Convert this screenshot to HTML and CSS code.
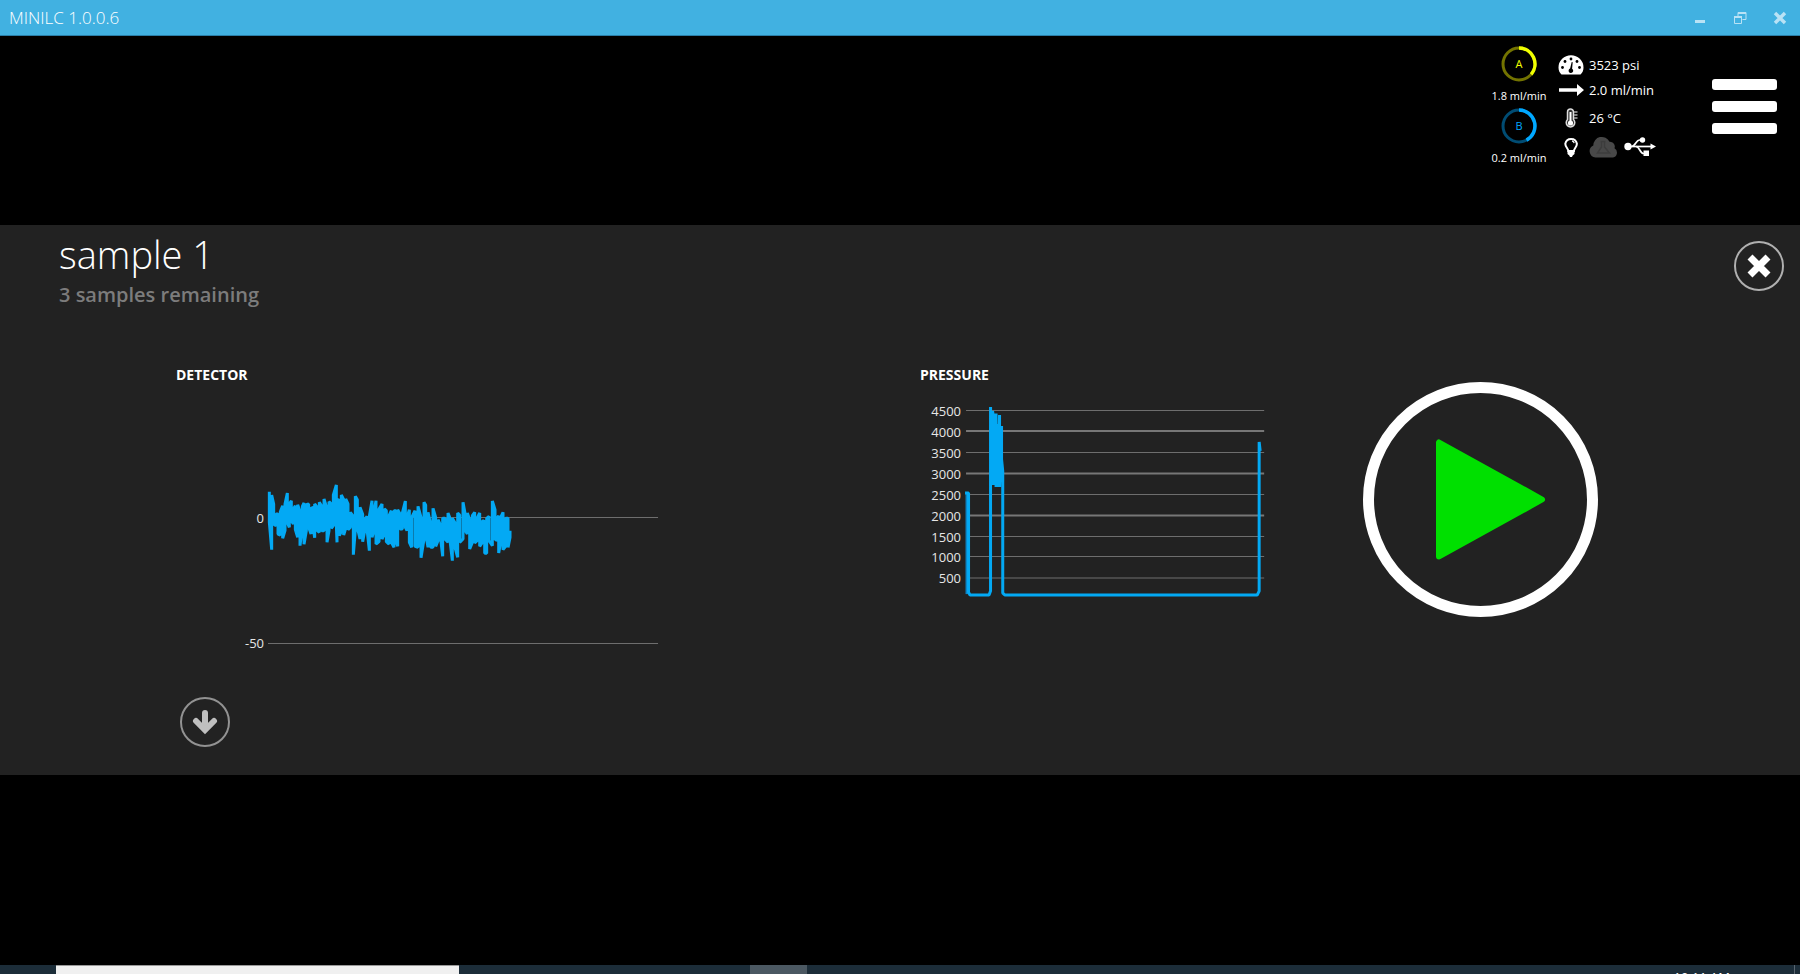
FILE: index.html
```html
<!DOCTYPE html>
<html lang="en">
<head>
<meta charset="utf-8">
<title>MINILC 1.0.0.6</title>
<link rel="stylesheet" href="styles.css">
</head>
<body>
<div class="window">
  <div class="titlebar">
    <span class="app-name">MINILC 1.0.0.6</span>
    <div class="window-buttons">
      <button type="button" class="window-button" aria-label="Minimize"><svg width="14" height="14" viewBox="0 0 14 14"><path d="M2 9h10v3H2z" fill="currentColor"/></svg></button>
      <button type="button" class="window-button" aria-label="Restore"><svg width="14" height="14" viewBox="0 0 14 14" fill="none" stroke="currentColor"><path d="M5 5V1.500h8V8.500H9.500"/><path d="M5 2h8" stroke-width="2"/><path d="M1.500 5.500h7v7h-7z"/><path d="M1 6h8" stroke-width="2"/></svg></button>
      <button type="button" class="window-button" aria-label="Close"><svg width="14" height="14" viewBox="0 0 14 14"><path d="M2 2l10 10M12 2L2 12" stroke="currentColor" stroke-width="3.400"/></svg></button>
    </div>
  </div>

  <header class="header">
    <div class="pumps">
      <div class="pump">
        <svg class="ring" viewBox="0 0 36 36"><circle cx="18" cy="18" r="16" fill="none" stroke="#737300" stroke-width="3"/><path d="M18 2A16 16 0 0 1 30.200 28.300" fill="none" stroke="#f0ff00" stroke-width="3.500"/><text x="18" y="22" class="ring-text ring-a">A</text></svg>
        <span class="pump-flow">1.8 ml/min</span>
      </div>
      <div class="pump">
        <svg class="ring" viewBox="0 0 36 36"><circle cx="18" cy="18" r="16" fill="none" stroke="#004c73" stroke-width="3"/><path d="M18 2A16 16 0 0 1 25.500 32.100" fill="none" stroke="#00a8ff" stroke-width="3.500"/><text x="18" y="22" class="ring-text ring-b">B</text></svg>
        <span class="pump-flow">0.2 ml/min</span>
      </div>
    </div>
    <div class="readings">
      <svg width="26" height="20" viewBox="0 0 26 20"><path fill="#fff" d="M3.500 19.500C1.500 17.500.5 15.500.5 12.500a12.500 12.300 0 0 1 25 0c0 3-1 5-3 7z"/><g fill="#000"><circle cx="4.500" cy="12.500" r="1.400"/><circle cx="7" cy="6.500" r="1.400"/><circle cx="13" cy="4" r="1.400"/><circle cx="19" cy="6.500" r="1.400"/><circle cx="21.500" cy="12.500" r="1.400"/><path d="M13.700 7l1 .2-.6 6.500a2.300 2.300 0 1 1-2-.2z"/></g></svg>
      <span>3523 psi</span>
      <svg width="26" height="14" viewBox="0 0 26 14"><path fill="#fff" d="M1 5.300h18V1l7 6-7 6V8.700H1z"/></svg>
      <span>2.0 ml/min</span>
      <svg width="26" height="20" viewBox="0 0 26 20"><path d="M9.500 11.500V4a3 3 0 0 1 6 0v7.500a4.300 4.300 0 1 1-6 0z" fill="#333" stroke="#ddd" stroke-width="1.500"/><circle cx="12.500" cy="15" r="2.600" fill="#fff"/><path d="M12.500 4v11" stroke="#fff" stroke-width="2"/><path d="M16 4h3.500M16 7h3.500M16 10h3.500" stroke="#aaa" stroke-width="1.500"/></svg>
      <span>26 °C</span>
      <svg width="26" height="20" viewBox="0 0 26 20"><path d="M10.300 14c0-2.500-3-3.800-3-7.300a5.900 5.900 0 0 1 11.600 0c0 3.500-3 4.800-3 7.300z" fill="none" stroke="#fff" stroke-width="2"/><path d="M14 3.800c1.300.3 2 1 2.200 2.300" fill="none" stroke="#fff" stroke-width="1.200"/><path fill="#fff" d="M9.500 13.500h7V17l-1.800 1.500-.7 1.500h-2l-.7-1.500L9.500 17z"/></svg>
      <span class="links">
        <svg width="30" height="22" viewBox="0 0 30 22"><path fill="#484848" d="M6.500 21.500A6.300 6.300 0 0 1 4.300 9.500 8.500 8.500 0 0 1 20.500 5.800a4.800 4.800 0 0 1 5 6.500 5 5 0 0 1-1.500 9.200z"/><path d="M11.500 5.500h5M12.500 6v5l-4 6h12l-5-6V6" fill="none" stroke="#3c3c3c" stroke-width="1.500"/></svg>
        <svg width="32" height="22" viewBox="0 0 32 22"><g fill="none" stroke="#fff" stroke-width="1.700"><path d="M4 10.500h24"/><path d="M7.500 10.500c4 0 4.500-6.500 8-6.500h3"/><path d="M12 10.500c3.500 0 4 7 7.500 7h2"/></g><circle cx="4" cy="10.500" r="3.700" fill="#fff"/><circle cx="18.500" cy="4" r="2.700" fill="#fff"/><path fill="#fff" d="M19.500 14.500H25V20h-5.500zM26.500 7.500l5.500 3-5.500 3z"/></svg>
      </span>
    </div>
    <button type="button" class="menu-button" aria-label="Menu"><i class="bar"></i><i class="bar"></i><i class="bar"></i></button>
  </header>

  <main class="panel">
    <div class="panel-head">
      <div>
        <h1 class="sample-name">sample 1</h1>
        <p class="sample-left">3 samples remaining</p>
      </div>
      <button type="button" class="round-button" aria-label="Close"><svg width="26" height="26" viewBox="0 0 26 26"><path d="M4 4l18 18M22 4L4 22" stroke="#fff" stroke-width="7"/></svg></button>
    </div>
    <div class="charts">
      <section>
        <h2 class="chart-title">DETECTOR</h2>
        <svg class="plot plot-detector" viewBox="176 396 491 264">
          <path class="grid-line" d="M268 518.500H658M268 644.500H658"/>
          <g class="axis"><text x="264" y="524">0</text><text x="264" y="649">-50</text></g>
          <svg x="230" y="460" width="300" height="120" viewBox="0 0 900 360"><path class="noise" d="M118 98V190L125 272V108L131 135V195L138 200V165L144 165V225L151 228V158L158 140V238L165 215V135L172 102V190L178 205V135L184 125V185L190 195V150L196 140V212L203 235V137L210 158V260L217 205V142L222 132V256L229 215V137L236 135V205L243 225V148L250 145V210L254 236V135L262 145V215L268 220V130L275 142V215L282 215V120L291 150V250L297 215V128L304 135V208L310 200V108L319 78V200L321 250V125L328 122V230L334 218V108L341 122V228L347 208V120L354 135V212L361 205V160L370 172V287L376 212V112L382 122V205L390 240V145L398 166V248L404 215V182L411 172V210L418 275V172L426 125V235L432 215V155L438 125V255L447 248V150L456 135V240L463 225V150L469 155V248L477 255V170L484 155V250L492 265V155L498 155V245L503 262V152L510 165V210L517 210V162L526 126V205L531 215V175L538 152V250L545 265V175L555 155V262L564 265V142L573 175V296L582 240V130L587 138V225L594 265V160L602 195V265L609 265V148L617 175V262L624 245V182L632 200V240L638 292V178L645 178V240L654 250V162L660 178V245L667 305V178L674 190V262L683 295V162L689 168V250L699 240V130L706 168V215L712 225V162L719 182V270L727 250V170L734 160V252L741 245V178L749 162V262L757 250V185L764 188V283L770 283V178L777 172V245L787 260V126L795 152V240L801 245V178L806 170V282L812 250V175L819 160V272L827 262V178L834 178V265L840 235V215"/></svg>
        </svg>
      </section>
      <section>
        <h2 class="chart-title">PRESSURE</h2>
        <svg class="plot plot-pressure" viewBox="920 396 349 210">
          <path class="grid-line" d="M966 411.500H1264M966 453.500H1264M966 495.500H1264M966 537.500H1264M966 557.500H1264M966 579H1264"/>
          <path class="grid-line grid-strong" d="M966 432H1264M966 474.500H1264M966 516.500H1264"/>
          <g class="axis"><text x="961" y="417">4500</text><text x="961" y="438">4000</text><text x="961" y="459">3500</text><text x="961" y="480">3000</text><text x="961" y="501">2500</text><text x="961" y="522">2000</text><text x="961" y="543">1500</text><text x="961" y="563">1000</text><text x="961" y="584">500</text></g>
          <path d="M967 494V595" stroke="#0b86c8" stroke-width="3"/>
          <path class="trace" d="M965 494H968.500V593L970 596H989L990.500 592V408L992.500 486V412L994.500 425V486L996 414.500V488L998 425V488L999.500 416V488L1001.500 427V460L1002.700 472V594L1005 596H1257L1259 592V443L1260 452"/>
        </svg>
      </section>
      <button type="button" class="play-button" aria-label="Start"><svg viewBox="0 0 235 235"><circle cx="117.500" cy="117.500" r="112" fill="none" stroke="#fff" stroke-width="11"/><path d="M76 60.500v114L179 117.500z" fill="#00e000" stroke="#00e000" stroke-width="6" stroke-linejoin="round"/></svg></button>
    </div>
    <div class="panel-foot">
      <button type="button" class="round-button round-dim" aria-label="Next"><svg width="26" height="26" viewBox="0 0 26 26" fill="none" stroke="#bfbfbf" stroke-linecap="round"><path d="M13 4v14" stroke-width="6"/><path d="M4 12l9 9 9-9" stroke-width="6"/></svg></button>
    </div>
  </main>

  <footer class="taskbar">
    <div class="task-search"></div>
    <div class="task-active"></div>
    <span class="clock">10:11 AM</span>
    <div class="show-desktop"></div>
  </footer>
</div>
</body>
</html>
```

FILE: styles.css
```css
* { box-sizing: border-box; }

body {
  margin: 0;
  background: #000;
  color: #fff;
  font-family: "Open Sans", "Noto Sans", sans-serif;
  font-size: 13px;
}

button {
  padding: 0;
  border: 0;
  background: none;
  color: inherit;
  font: inherit;
  cursor: pointer;
}

svg { display: block; }

h1, h2, p { margin: 0; }

.window {
  display: flex;
  flex-direction: column;
  height: 100vh;
  overflow: hidden;
}

/* Title bar */
.titlebar {
  display: flex;
  flex: none;
  align-items: center;
  justify-content: space-between;
  height: 36px;
  padding: 0 13px 0 9px;
  border-bottom: 1px solid #2a7ea8;
  background: #41b1e1;
}

.app-name {
  font-size: 17px;
  font-weight: 300;
}

.window-buttons {
  display: flex;
  gap: 26px;
  color: #b9e2f5;
}

/* Status header */
.header {
  display: flex;
  flex: none;
  align-items: flex-start;
  justify-content: flex-end;
  min-height: 189px;
  padding: 10px 23px 0;
}

.pumps {
  display: grid;
  gap: 4px;
  width: 60px;
  margin-right: 9px;
}

.pump {
  display: grid;
  gap: 6px;
  justify-items: center;
}

.ring { width: 36px; height: 36px; }

.ring-text {
  font-size: 11px;
  text-anchor: middle;
}

.ring-a { fill: #f0ff00; }
.ring-b { fill: #00a8ff; }

.pump-flow {
  font-size: 11px;
  line-height: 16px;
  white-space: nowrap;
}

.readings {
  display: grid;
  grid-template-columns: 26px 67px;
  grid-template-rows: 24px 26px 30px 28px;
  column-gap: 5px;
  align-items: center;
  margin: 7px 56px 0 0;
  white-space: nowrap;
}

.links {
  display: flex;
  gap: 5px;
}

.menu-button {
  display: grid;
  gap: 11px;
  width: 65px;
  margin-top: 33px;
}

.bar {
  height: 11px;
  border-radius: 3px;
  background: #fff;
}

/* Run panel */
.panel {
  flex: none;
  padding-bottom: 24px;
  background: #222;
}

.panel-head {
  display: flex;
  align-items: flex-start;
  justify-content: space-between;
  min-height: 140px;
  padding: 0 16px 0 59px;
}

.sample-name {
  font-size: 38px;
  font-weight: 300;
  line-height: 58px;
}

.sample-left {
  color: #7c7c7c;
  font-size: 20px;
  font-weight: 600;
  line-height: 24px;
}

.round-button {
  display: grid;
  place-items: center;
  width: 50px;
  height: 50px;
  border: 2px solid #b0b0b0;
  border-radius: 50%;
}

.panel-head .round-button { margin-top: 16px; }

.round-dim { border-color: #929292; }

.charts {
  display: grid;
  grid-template-columns: 744fr 442fr 438fr;
  align-items: start;
  padding-left: 176px;
}

.chart-title {
  margin-bottom: 10px;
  font-size: 14px;
  font-weight: 700;
  line-height: 20px;
}

.plot-detector { width: 66%; }
.plot-pressure { width: 79%; }

.grid-line {
  fill: none;
  stroke: #6e6e6e;
}

.grid-strong {
  stroke: #777;
  stroke-width: 2;
}

.axis text {
  fill: #e6e6e6;
  font-size: 13px;
  text-anchor: end;
}

.noise {
  fill: none;
  stroke: #03a9f4;
  stroke-linejoin: bevel;
  stroke-width: 9;
}

.trace {
  fill: none;
  stroke: #03a9f4;
  stroke-linejoin: bevel;
  stroke-width: 3;
}

.play-button {
  width: 235px;
  margin: 17px 0 0 1px;
}

.panel-foot { padding: 38px 0 4px 180px; }

/* Taskbar edge */
.taskbar {
  display: flex;
  flex: none;
  height: 9px;
  margin-top: auto;
  padding-left: 56px;
  overflow: hidden;
  background: #1c2d39;
}

.task-search {
  width: 403px;
  border-top: 1px solid #999;
  background: #f0f0f0;
}

.task-active {
  width: 57px;
  margin-left: 291px;
  background: #4b5862;
}

.clock {
  margin: 4px 64px 0 auto;
  font-size: 13px;
  line-height: 16px;
}

.show-desktop {
  width: 6px;
  border-left: 1px solid #5a6670;
}
```
